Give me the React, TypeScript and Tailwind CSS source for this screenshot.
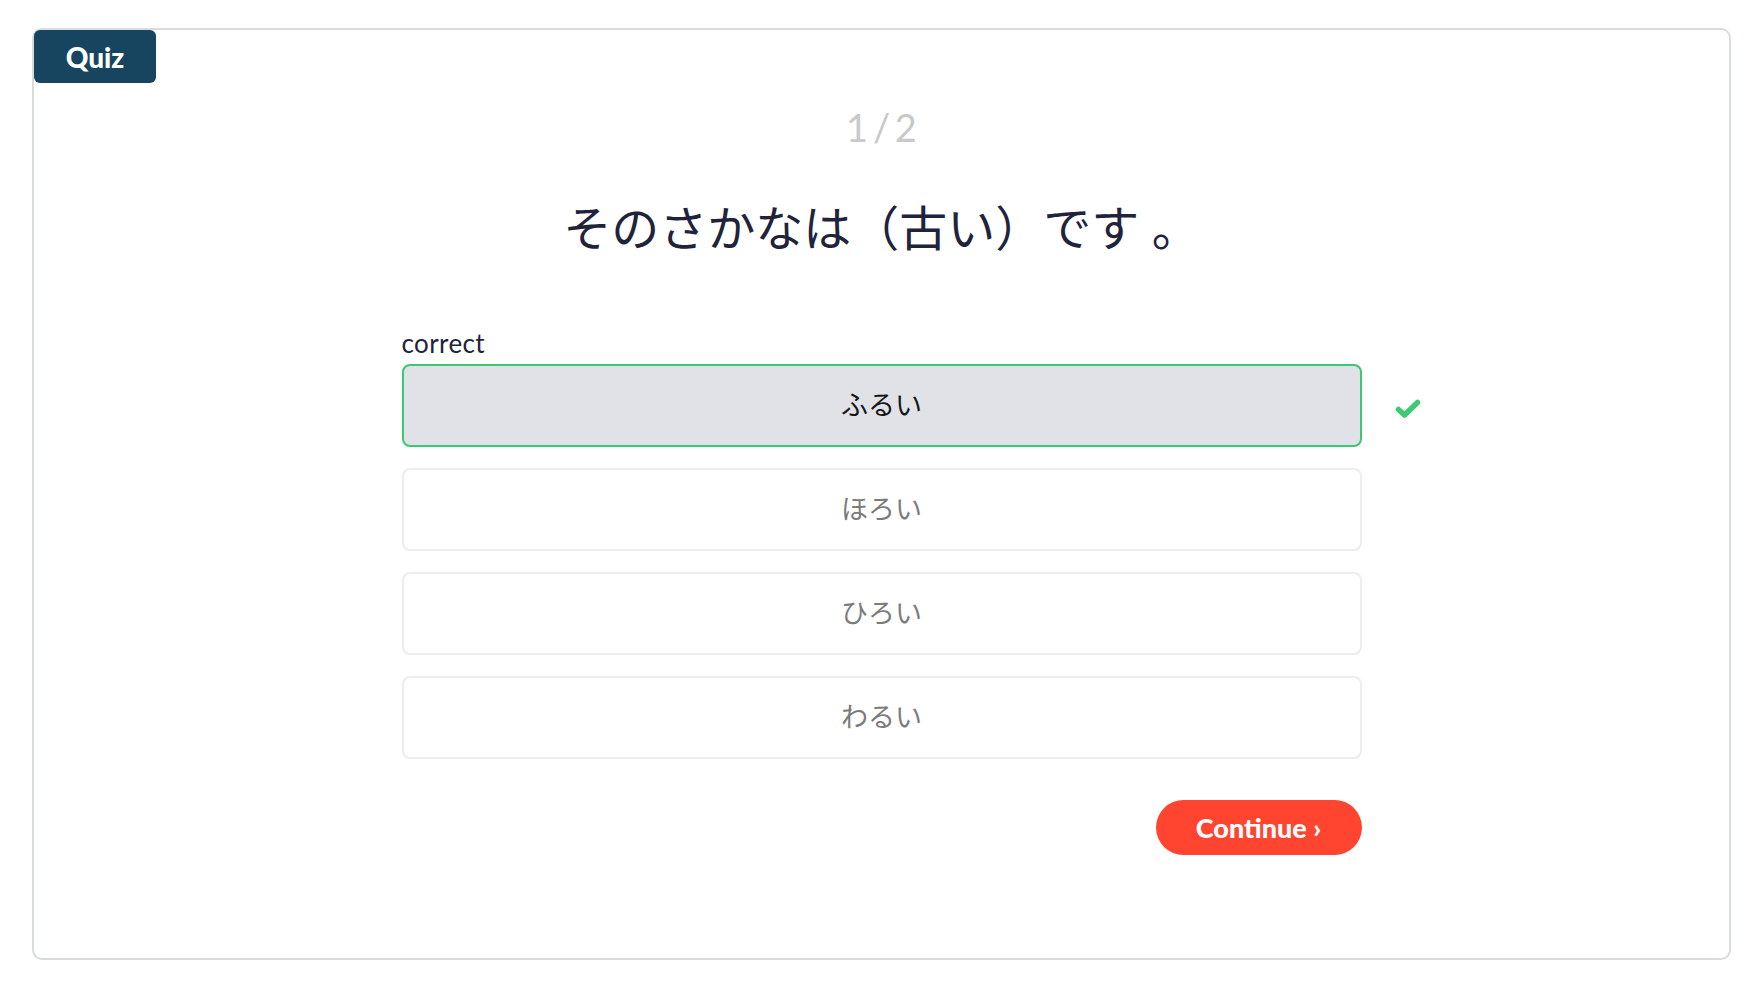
const latin = "font-['Lato','Noto_Sans_CJK_JP',sans-serif]"
const jp = "font-['Lato','Noto_Sans_CJK_JP',sans-serif]"

type Option = {
  label: string
  correct?: boolean
}

const options: Option[] = [
  { label: 'ふるい', correct: true },
  { label: 'ほろい' },
  { label: 'ひろい' },
  { label: 'わるい' },
]

function CheckIcon() {
  return (
    <svg width="26" height="20" viewBox="0 0 26 20" fill="none">
      <polyline
        points="3.5,10.5 9.5,16 22.5,3.5"
        stroke="#3ccb72"
        strokeWidth="5.5"
        strokeLinecap="round"
        strokeLinejoin="round"
      />
    </svg>
  )
}

export default function App() {
  return (
    <div className="min-h-[988px] bg-white pt-[28px] pb-[28px] pl-[32px] pr-[27px]">
      <div className="relative h-[932px] rounded-[10px] border-2 border-[#d9dcdc] bg-white">
        {/* badge */}
        <div className="absolute left-0 top-0 flex h-[53px] w-[122px] items-center justify-center rounded-[6px] bg-[#17455f]">
          <span className={`${latin} text-[28px] font-black leading-none text-white`}>Quiz</span>
        </div>

        <div className="flex flex-col items-center">
          <div className={`${latin} mt-[78px] text-[38px] leading-none text-[#c9c9c9]`}>1{'\u2009'}/{'\u2009'}2</div>

          <h1 className={`${jp} mt-[58px] text-[48px] font-normal leading-none text-[#20233a]`}>
            そのさかなは（古い）です 。
          </h1>

          <div className="mt-[78px] w-[960px]">
            <div className={`${latin} mb-[8px] text-[26px] leading-none tracking-[0.4px] text-[#22243a]`}>correct</div>

            <div className="flex flex-col gap-[21px]">
              {options.map((o) => (
                <div key={o.label} className="relative">
                  <div
                    className={
                      o.correct
                        ? `${jp} flex h-[83px] items-center justify-center rounded-[8px] border-2 border-[#3dc673] bg-[#e1e2e7] text-[27px] text-[#161616]`
                        : `${jp} flex h-[83px] items-center justify-center rounded-[8px] border-2 border-[#ededed] bg-white text-[27px] text-[#7b7b7b]`
                    }
                  >
                    {o.label}
                  </div>
                  {o.correct && (
                    <div className="absolute left-[calc(100%+33px)] top-[35px]">
                      <CheckIcon />
                    </div>
                  )}
                </div>
              ))}
            </div>

            <div className="mt-[41px] flex justify-end">
              <button
                className={`${latin} flex h-[55px] w-[206px] items-center justify-center rounded-full bg-[#ff4530] text-[27px] font-black leading-none text-white`}
              >
                Continue ›
              </button>
            </div>
          </div>
        </div>
      </div>
    </div>
  )
}
